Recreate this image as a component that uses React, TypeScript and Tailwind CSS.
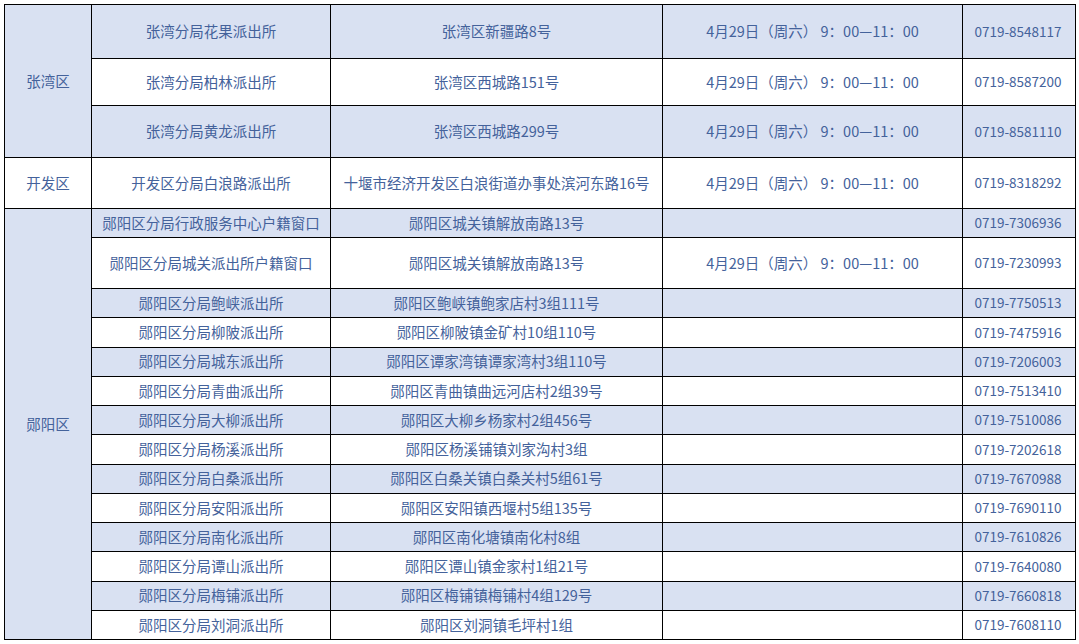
import React from 'react';

type Row = {
    district?: { name: string; span: number };
    station: string;
    address: string;
    time?: string;
    phone: string;
    h: string;
};

const TIME = '4月29日（周六） 9：00—11：00';

const rows: Row[] = [
    { district: { name: '张湾区', span: 3 }, station: '张湾分局花果派出所', address: '张湾区新疆路8号', time: TIME, phone: '0719-8548117', h: 'h-[54px]' },
    { station: '张湾分局柏林派出所', address: '张湾区西城路151号', time: TIME, phone: '0719-8587200', h: 'h-[47px]' },
    { station: '张湾分局黄龙派出所', address: '张湾区西城路299号', time: TIME, phone: '0719-8581110', h: 'h-[52px]' },
    { district: { name: '开发区', span: 1 }, station: '开发区分局白浪路派出所', address: '十堰市经济开发区白浪街道办事处滨河东路16号', time: TIME, phone: '0719-8318292', h: 'h-[51px]' },
    { district: { name: '郧阳区', span: 14 }, station: '郧阳区分局行政服务中心户籍窗口', address: '郧阳区城关镇解放南路13号', phone: '0719-7306936', h: 'h-[29px]' },
    { station: '郧阳区分局城关派出所户籍窗口', address: '郧阳区城关镇解放南路13号', time: TIME, phone: '0719-7230993', h: 'h-[51px]' },
    { station: '郧阳区分局鲍峡派出所', address: '郧阳区鲍峡镇鲍家店村3组111号', phone: '0719-7750513', h: 'h-[29.25px]' },
    { station: '郧阳区分局柳陂派出所', address: '郧阳区柳陂镇金矿村10组110号', phone: '0719-7475916', h: 'h-[29.25px]' },
    { station: '郧阳区分局城东派出所', address: '郧阳区谭家湾镇谭家湾村3组110号', phone: '0719-7206003', h: 'h-[29.25px]' },
    { station: '郧阳区分局青曲派出所', address: '郧阳区青曲镇曲远河店村2组39号', phone: '0719-7513410', h: 'h-[29.25px]' },
    { station: '郧阳区分局大柳派出所', address: '郧阳区大柳乡杨家村2组456号', phone: '0719-7510086', h: 'h-[29.25px]' },
    { station: '郧阳区分局杨溪派出所', address: '郧阳区杨溪铺镇刘家沟村3组', phone: '0719-7202618', h: 'h-[29.25px]' },
    { station: '郧阳区分局白桑派出所', address: '郧阳区白桑关镇白桑关村5组61号', phone: '0719-7670988', h: 'h-[29.25px]' },
    { station: '郧阳区分局安阳派出所', address: '郧阳区安阳镇西堰村5组135号', phone: '0719-7690110', h: 'h-[29.25px]' },
    { station: '郧阳区分局南化派出所', address: '郧阳区南化塘镇南化村8组', phone: '0719-7610826', h: 'h-[29.25px]' },
    { station: '郧阳区分局谭山派出所', address: '郧阳区谭山镇金家村1组21号', phone: '0719-7640080', h: 'h-[29.25px]' },
    { station: '郧阳区分局梅铺派出所', address: '郧阳区梅铺镇梅铺村4组129号', phone: '0719-7660818', h: 'h-[29.25px]' },
    { station: '郧阳区分局刘洞派出所', address: '郧阳区刘洞镇毛坪村1组', phone: '0719-7608110', h: 'h-[29.25px]' },
];

const cell = 'border border-black text-center align-middle p-0 leading-none whitespace-nowrap';

export default function App() {
    return (
        <div className="w-[1079px] h-[644px] bg-white pt-[4px] pl-[4px] text-[#44629b] text-[14.5px] font-['Noto_Sans_CJK_SC',sans-serif]">
            <table className="table-fixed border-collapse w-[1071px]">
                <colgroup>
                    <col className="w-[87px]" />
                    <col className="w-[239px]" />
                    <col className="w-[332px]" />
                    <col className="w-[300px]" />
                    <col className="w-[113px]" />
                </colgroup>
                <tbody>
                    {rows.map((r, i) => {
                        const bg = i % 2 === 0 ? 'bg-[#d9e1f2]' : 'bg-white';
                        const dBg = r.district?.name === '开发区' ? 'bg-white' : 'bg-[#d9e1f2]';
                        return (
                            <tr key={i} className={r.h}>
                                {r.district && (
                                    <td rowSpan={r.district.span} className={`${cell} ${dBg}`}>
                                        {r.district.name}
                                    </td>
                                )}
                                <td className={`${cell} ${bg}`}>{r.station}</td>
                                <td className={`${cell} ${bg}`}>{r.address}</td>
                                <td className={`${cell} ${bg}`}>{r.time ?? ''}</td>
                                <td className={`${cell} ${bg} text-[13.5px] pr-[2px]`}>{r.phone}</td>
                            </tr>
                        );
                    })}
                </tbody>
            </table>
        </div>
    );
}
